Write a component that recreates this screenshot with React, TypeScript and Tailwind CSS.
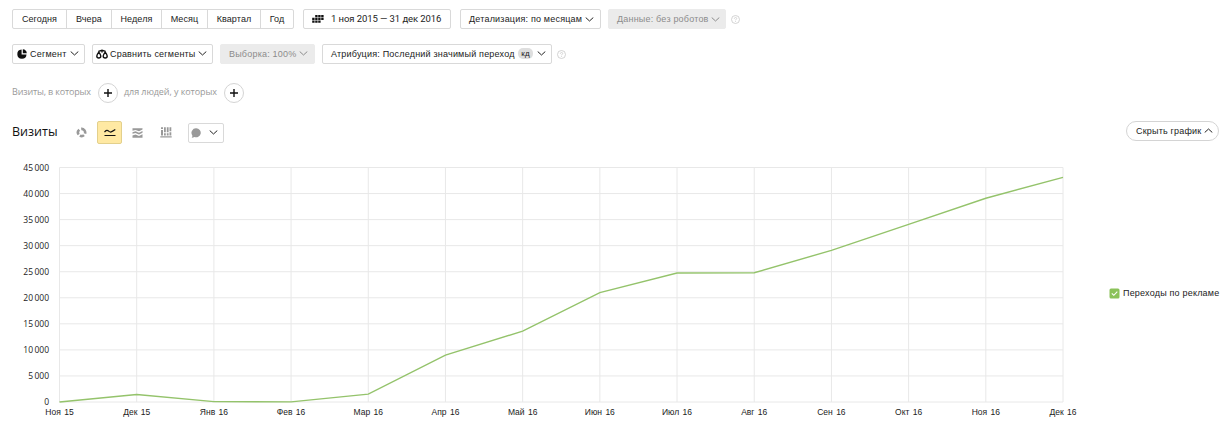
import type { ReactNode } from 'react';
import clsx from 'clsx';

interface ButtonProps {
  className?: string;
  disabled?: boolean;
  children: ReactNode;
}

interface ChevronProps {
  className?: string;
  up?: boolean;
}

const PERIODS = [
  { label: 'Сегодня', className: 'w-[54px]' },
  { label: 'Вчера', className: 'w-[45px]' },
  { label: 'Неделя', className: 'w-[50px]' },
  { label: 'Месяц', className: 'w-[46px]' },
  { label: 'Квартал', className: 'w-[53px]' },
  { label: 'Год', className: 'w-[32px]' },
];

const VISITS = [
  { month: 'Ноя 15', value: 0 },
  { month: 'Дек 15', value: 1450 },
  { month: 'Янв 16', value: 80 },
  { month: 'Фев 16', value: 30 },
  { month: 'Мар 16', value: 1500 },
  { month: 'Апр 16', value: 9000 },
  { month: 'Май 16', value: 13600 },
  { month: 'Июн 16', value: 21000 },
  { month: 'Июл 16', value: 24750 },
  { month: 'Авг 16', value: 24800 },
  { month: 'Сен 16', value: 29100 },
  { month: 'Окт 16', value: 34100 },
  { month: 'Ноя 16', value: 39100 },
  { month: 'Дек 16', value: 43100 },
];

const TICKS = [45, 40, 35, 30, 25, 20, 15, 10, 5, 0];

const LEFT = 59.5;
const RIGHT = 1063;
const TOP = 17.5;
const BOTTOM = 252;

const getX = (index: number) => LEFT + (index * (RIGHT - LEFT)) / (VISITS.length - 1);
const getY = (value: number) => BOTTOM - (value / 45000) * (BOTTOM - TOP);

const Button = ({ className, disabled, children }: ButtonProps) => (
  <button
    className={clsx(
      'flex h-[20px] shrink-0 items-center rounded-[2px] border tracking-[0.2px] whitespace-nowrap',
      disabled ? 'border-[#ebebeb] bg-[#ebebeb] text-[#8c8c8c]' : 'border-[#d9d9d9] bg-white',
      className,
    )}
  >
    {children}
  </button>
);

const Chevron = ({ className, up }: ChevronProps) => (
  <svg className={clsx('shrink-0', className)} width="9" height="5" viewBox="0 0 9 5" fill="none">
    <path d={up ? 'M0.7 4.5L4.5 1L8.3 4.5' : 'M0.7 0.5L4.5 4L8.3 0.5'} stroke="currentColor" strokeWidth="1" />
  </svg>
);

const Help = () => (
  <svg className="ml-[5px] shrink-0" width="9" height="9" viewBox="0 0 9 9" fill="none" stroke="#c8c8c8" strokeWidth="0.8">
    <circle cx="4.5" cy="4.5" r="4" />
    <path d="M3.3 3.7C3.3 2 5.7 2.1 5.7 3.5C5.7 4.3 4.5 4.3 4.5 5.3M4.5 6.1V6.9" />
  </svg>
);

const AddButton = ({ className }: { className?: string }) => (
  <button
    className={clsx(
      'flex size-[20px] shrink-0 items-center justify-center rounded-full border border-[#d4d4d4]',
      className,
    )}
  >
    <svg width="8" height="8" viewBox="0 0 8 8" stroke="#111" strokeWidth="1.4">
      <path d="M4 0V8M0 4H8" />
    </svg>
  </button>
);

const Chart = () => (
  <svg className="block shrink-0" width="1090" height="274" viewBox="0 0 1090 274">
    <g stroke="#e8e8e8" strokeWidth="1">
      {TICKS.map((tick) => (
        <line key={tick} x1={LEFT} x2={RIGHT} y1={getY(tick * 1000)} y2={getY(tick * 1000)} />
      ))}
      {VISITS.map(({ month }, i) => (
        <line key={month} x1={getX(i)} x2={getX(i)} y1={TOP} y2={BOTTOM} />
      ))}
    </g>
    <polyline
      points={VISITS.map(({ value }, i) => `${getX(i)},${getY(value)}`).join(' ')}
      fill="none"
      stroke="#94c36b"
      strokeWidth="1.4"
    />
    <g fill="#222" className="font-['Open_Sans',sans-serif] text-[8.5px]" textAnchor="end">
      {TICKS.map((tick) => (
        <text key={tick} x="49" y={getY(tick * 1000) + 3}>
          {tick === 0 ? '0' : `${tick}\u2009000`}
        </text>
      ))}
    </g>
    <g fill="#222" className="text-[8.5px] [word-spacing:1px]" textAnchor="middle">
      {VISITS.map(({ month }, i) => (
        <text key={month} x={getX(i)} y="265">
          {month}
        </text>
      ))}
    </g>
  </svg>
);

const App = () => (
  <div className="h-[444px] w-[1221px] overflow-hidden bg-white font-['Liberation_Sans',Arial,sans-serif] text-[9px] leading-[12px] text-[#222]">
    {/* Period */}
    <div className="mt-[9px] flex h-[20px] items-center pl-[12px]">
      <div className="flex h-[20px] w-[282px] shrink-0 divide-x divide-[#d9d9d9] rounded-[2px] border border-[#d9d9d9]">
        {PERIODS.map(({ label, className }) => (
          <button key={label} className={clsx('shrink-0 text-center tracking-[0.1px]', className)}>
            {label}
          </button>
        ))}
      </div>
      <Button className="ml-[9px] w-[148px] pl-[8px]">
        <svg width="12" height="8" viewBox="0 0 12 8" fill="#111">
          <path d="M3.2 0h2.4v2.2H3.2zM6.2 0h2.4v2.2H6.2zM9.2 0h2.4v2.2H9.2zM0.2 2.8h2.4V5H0.2zM3.2 2.8h2.4V5H3.2zM6.2 2.8h2.4V5H6.2zM9.2 2.8h2.4V5H9.2zM0.2 5.6h2.4v2.2H0.2zM3.2 5.6h2.4v2.2H3.2zM6.2 5.6h2.4v2.2H6.2z" />
        </svg>
        <span className="ml-[7px] font-[Roboto,sans-serif] text-[9.5px] tracking-[-0.08px]">
          1 ноя 2015 — 31 дек 2016
        </span>
      </Button>
      <Button className="ml-[9px] w-[141px] pl-[8px]">
        <span className="w-[113px] text-left">Детализация: по месяцам</span>
        <Chevron className="ml-[3px]" />
      </Button>
      <Button className="ml-[7px] w-[118px] pl-[8px]" disabled>
        <span className="w-[91px] text-left">Данные: без роботов</span>
        <Chevron className="ml-[3px]" />
      </Button>
      <Help />
    </div>

    {/* Segments */}
    <div className="mt-[15px] flex h-[20px] items-center pl-[12px]">
      <Button className="w-[73px] pb-px pl-[4px]">
        <svg width="10" height="10" viewBox="0 0 10 10" fill="#111">
          <path d="M4.6 0.5V5.4H9.5A4.6 4.6 0 1 1 4.6 0.5Z" />
          <path d="M5.8 0.2A4.4 4.4 0 0 1 9.8 4.2H5.8Z" />
        </svg>
        <span className="ml-[3px] w-[37px] text-left">Сегмент</span>
        <Chevron className="ml-[3px]" />
      </Button>
      <Button className="ml-[7px] w-[121px] pb-px pl-[3px]">
        <svg width="12" height="10" viewBox="0 0 12 10" fill="none" stroke="#111" strokeWidth="1.4">
          <path d="M2.8 3.2C1.6 4.8 0.8 5.8 0.8 7A2 2 0 0 0 4.8 7C4.8 5.8 4 4.8 2.8 3.2Z" />
          <path d="M9.2 3.2C8 4.8 7.2 5.8 7.2 7A2 2 0 0 0 11.2 7C11.2 5.8 10.4 4.8 9.2 3.2Z" />
          <path d="M2.4 2.3L6 1.3L9.6 2.3M6 0.8V3.4" />
        </svg>
        <span className="ml-[2px] w-[85px] text-left">Сравнить сегменты</span>
        <Chevron className="ml-[3px]" />
      </Button>
      <Button className="ml-[7px] w-[95px] pb-px pl-[8px]" disabled>
        <span className="w-[67px] text-left">Выборка: 100%</span>
        <Chevron className="ml-[3px]" />
      </Button>
      <Button className="ml-[7px] w-[230px] pb-px pl-[8px]">
        <span className="w-[184px] text-left">Атрибуция: Последний значимый переход</span>
        <span className="ml-[3px] h-[11px] w-[15px] rounded-[5px] bg-[#dedede] text-center text-[8px] leading-[11px]">
          кд
        </span>
        <Chevron className="ml-[4px]" />
      </Button>
      <Help />
    </div>

    {/* Conditions */}
    <div className="mt-[19px] flex h-[20px] items-center pl-[12px] font-['Open_Sans',sans-serif] tracking-[-0.17px] text-[#999]">
      <span className="w-[79px] -translate-y-px whitespace-nowrap">Визиты, в которых</span>
      <AddButton className="ml-[7px]" />
      <span className="ml-[6px] w-[93px] -translate-y-px tracking-[-0.08px] whitespace-nowrap">
        для людей, у которых
      </span>
      <AddButton className="ml-[7px]" />
    </div>

    {/* Chart toolbar */}
    <div className="mt-[18px] flex h-[23px] items-center pr-[2px] pl-[12px]">
      <h2 className="w-[64px] -translate-y-px font-['Open_Sans',sans-serif] text-[12.5px] leading-[18px] text-[#111]">
        Визиты
      </h2>
      <svg width="11" height="11" viewBox="0 0 11 11" fill="none" stroke="#999" strokeWidth="2.6">
        <path d="M5.2 1.9A3.6 3.6 0 0 1 9 6.6" />
        <path d="M3.3 2.7A3.6 3.6 0 0 0 2.7 7.6" />
        <path d="M3.9 8.6A3.6 3.6 0 0 0 8 8.1" />
      </svg>
      <button className="ml-[10px] flex h-[23px] w-[25px] items-center justify-center rounded-[2px] border border-[#e3d08c] bg-[#ffe9a3]">
        <svg width="12" height="9" viewBox="0 0 12 9" fill="none" stroke="#111" strokeWidth="1.2">
          <path d="M0.5 4.2C2.2 2 3.4 2 5 3.4C6.5 4.6 7.2 4.2 11.3 1.6M0.5 7.5H11.5" />
        </svg>
      </button>
      <svg className="ml-[10px]" width="11" height="10" viewBox="0 0 11 10" fill="#999">
        <path d="M0.5 0.2H10.5V1.4L7 3.2L3.5 1.9L0.5 2.7Z" />
        <path d="M0.5 4.2L3.5 3.2L7 4.8L10.5 3V4.8L7 6.5L3.5 4.9L0.5 5.8Z" />
        <path d="M0.5 7.5L3.5 6.5L7 8L10.5 6.3V9.8H0.5Z" />
      </svg>
      <svg className="ml-[17px]" width="12" height="11" viewBox="0 0 12 11" fill="#999">
        <path d="M1 0.3h2V2H1zM1 3h2v5.4H1zM4 0.3h1.8v5H4zM4 6.3h1.8v2.1H4zM6.8 0.3h1.8v5H6.8zM6.8 6.3h1.8v2.1H6.8zM9.5 0.3h1.8v4H9.5zM9.5 5.3h1.8v3.1H9.5zM0.3 9.3h11.4v1.2H0.3z" />
      </svg>
      <Button className="ml-[16px] w-[36px] pl-[2px]">
        <svg width="10" height="10" viewBox="0 0 10 10" fill="#999">
          <path d="M5.2 0.3A4.5 4.5 0 1 1 3.4 8.9Q2 9.8 0.7 9.7Q1.6 8.6 1.3 7.4A4.5 4.5 0 0 1 5.2 0.3Z" />
        </svg>
        <Chevron className="ml-[8px]" />
      </Button>
      <button className="ml-auto flex h-[20px] w-[93px] -translate-y-[2px] items-center rounded-full border border-[#d4d4d4] pl-[9px] tracking-[0.2px] whitespace-nowrap">
        <span className="w-[66px] text-left">Скрыть график</span>
        <Chevron className="ml-[2px]" up />
      </button>
    </div>

    {/* Chart and legend */}
    <div className="mt-[6px] flex">
      <Chart />
      <label className="mt-[137px] ml-[19px] flex h-[12px] items-center whitespace-nowrap">
        <svg width="11" height="11" viewBox="0 0 11 11" fill="none">
          <rect x="0.5" y="0.5" width="10" height="10" rx="1.5" fill="#8bc25a" />
          <path d="M2.8 5.4L4.8 7.3L8.3 3.7" stroke="white" strokeWidth="1.1" />
        </svg>
        <span className="ml-[3px] tracking-[0.2px]">Переходы по рекламе</span>
      </label>
    </div>
  </div>
);

export default App;
